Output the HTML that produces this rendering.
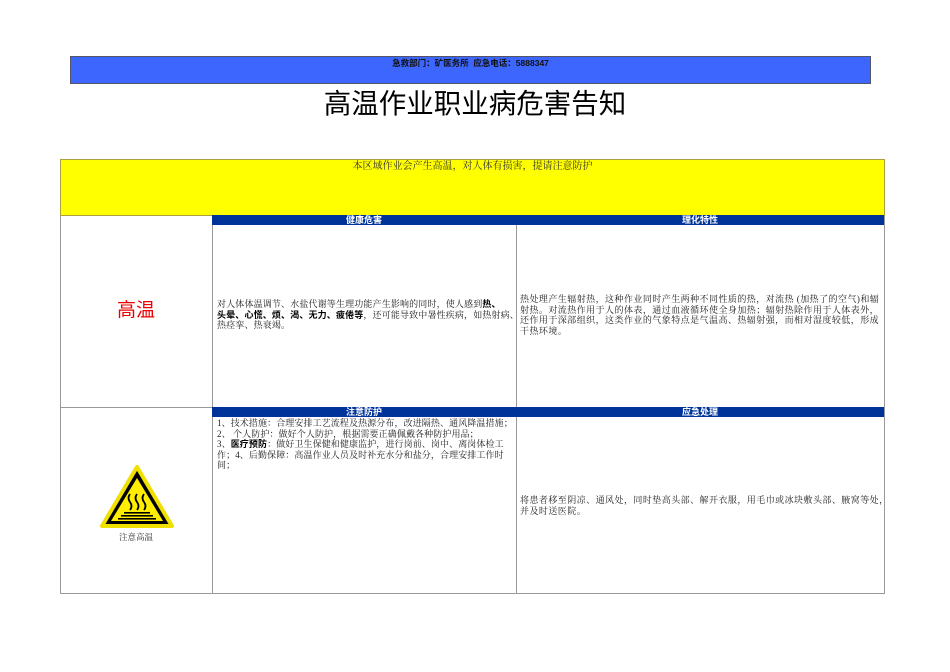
<!DOCTYPE html>
<html><head><meta charset="utf-8"><style>
body{margin:0;width:950px;height:672px;background:#fff;position:relative;font-family:"Liberation Serif","Noto Serif CJK SC",serif;overflow:hidden}
.a{position:absolute;box-sizing:border-box}
.hb{background:#003399;color:#fff;font-family:"Liberation Sans","Noto Sans CJK SC",sans-serif;font-weight:bold;font-size:9px;line-height:10px;text-align:center}
.t{font-size:9px;line-height:10.5px;color:#222}
.n{white-space:nowrap}
b{font-family:"Liberation Sans","Noto Sans CJK SC",sans-serif;color:#000}
</style></head><body>
<div class="a" style="left:70px;top:56px;width:801px;height:28px;background:#3d66ff;border:1px solid #556;font-family:'Liberation Sans','Noto Sans CJK SC',sans-serif;font-weight:bold;font-size:8.5px;text-align:center;line-height:13px;color:#111">急救部门：矿医务所 &nbsp;应急电话：5888347</div>
<div class="a" style="left:0;top:85px;width:950px;text-align:center;font-family:'Liberation Sans','Noto Sans CJK SC',sans-serif;font-size:27.5px;line-height:38px;color:#000">高温作业职业病危害告知</div>
<div class="a" style="left:60px;top:159px;width:825px;height:435px;border:1px solid #999"></div>
<div class="a" style="left:60px;top:159px;width:825px;height:57px;background:#ffff00;border:1px solid #aaa040;text-align:center;font-size:10px;line-height:13px;color:#333">本区域作业会产生高温，对人体有损害，提请注意防护</div>
<div class="a" style="left:212px;top:215px;width:1px;height:379px;background:#999"></div>
<div class="a" style="left:516px;top:215px;width:1px;height:379px;background:#999"></div>
<div class="a" style="left:60px;top:407px;width:825px;height:1px;background:#999"></div>
<div class="a hb" style="left:212px;top:215px;width:304px">健康危害</div>
<div class="a hb" style="left:516px;top:215px;width:368px">理化特性</div>
<div class="a hb" style="left:212px;top:407px;width:304px">注意防护</div>
<div class="a hb" style="left:516px;top:407px;width:368px">应急处理</div>
<div class="a" style="left:60px;top:299px;width:152px;text-align:center;font-family:'Liberation Sans','Noto Sans CJK SC',sans-serif;font-size:19px;line-height:24px;color:#ee0000">高温</div>
<div class="a t n" style="left:217px;top:299px;letter-spacing:0.15px">对人体体温调节、水盐代谢等生理功能产生影响的同时，使人感到<b>热、</b><br><b>头晕、心慌、烦、渴、无力、疲倦等</b>，还可能导致中暑性疾病，如热射病、<br>热痉挛、热衰竭。</div>
<div class="a t" style="left:520px;top:294px;width:364px;letter-spacing:0.45px">热处理产生辐射热，这种作业同时产生两种不同性质的热，对流热 (加热了的空气)和辐射热。对流热作用于人的体表，通过血液循环使全身加热；辐射热除作用于人体表外，还作用于深部组织，这类作业的气象特点是气温高、热辐射强，而相对湿度较低，形成干热环境。</div>
<div class="a t" style="left:217px;top:418px;width:298px;letter-spacing:0.1px">1、技术措施：合理安排工艺流程及热源分布，改进隔热、通风降温措施；<br>2、 个人防护：做好个人防护，根据需要正确佩戴各种防护用品；<br>3、<b>医疗预防</b>：做好卫生保健和健康监护，进行岗前、岗中、离岗体检工作；4、后勤保障：高温作业人员及时补充水分和盐分，合理安排工作时间；</div>
<div class="a t n" style="left:520px;top:495px;letter-spacing:0.45px">将患者移至阴凉、通风处，同时垫高头部、解开衣服，用毛巾或冰块敷头部、腋窝等处，<br>并及时送医院。</div>
<svg class="a" style="left:99px;top:464px" width="76" height="66" viewBox="0 0 76 66">
<path d="M38 3 L73 62 L3 62 Z" fill="#000" stroke="#f0e000" stroke-width="4" stroke-linejoin="round"/>
<path d="M38 14 L64 57 L12 57 Z" fill="#ffee00"/>
<g fill="none" stroke="#000" stroke-width="1.8">
<path d="M31 30 q-3 4 0 8 q3 4 0 8"/><path d="M38 30 q-3 4 0 8 q3 4 0 8"/><path d="M45 30 q-3 4 0 8 q3 4 0 8"/>
</g>
<rect x="25" y="48" width="26" height="1.6"/><rect x="22" y="51" width="32" height="1.6"/><rect x="19" y="54" width="38" height="1.6"/>
</svg>
<div class="a" style="left:60px;top:531px;width:152px;text-align:center;font-size:8.5px;color:#333">注意高温</div>
</body></html>
